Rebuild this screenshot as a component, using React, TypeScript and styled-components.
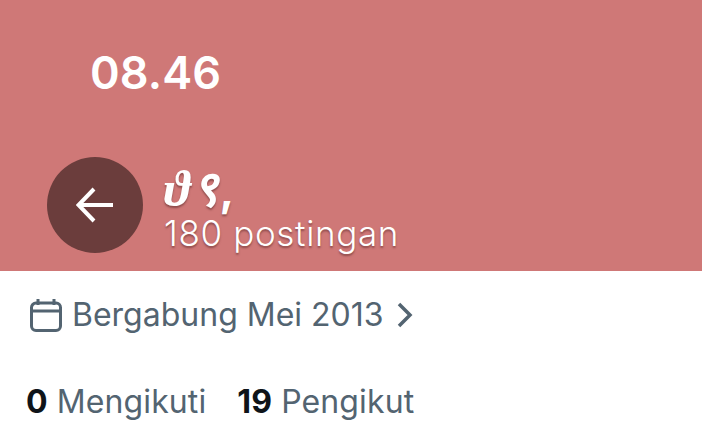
import styled, { createGlobalStyle } from 'styled-components';

const Global = createGlobalStyle`
  html, body { margin: 0; padding: 0; background: #fff; }
  body { font-family: Inter, "Noto Sans", sans-serif; }
`;

const Page = styled.div`
  width: 702px;
  height: 441px;
  overflow: hidden;
  display: flex;
  flex-direction: column;
`;

const Banner = styled.header`
  height: 271px;
  flex: none;
  box-sizing: border-box;
  background: #cf7877;
  color: #fff;
  display: flex;
  flex-direction: column;
  justify-content: space-between;
  padding: 46px 0 18px 47px;
`;

const Clock = styled.div`
  margin-left: 43px;
  font-size: 45px;
  line-height: 54px;
  font-weight: 600;
  letter-spacing: 0.1px;
`;

const Bar = styled.div`
  display: flex;
  align-items: center;
  gap: 21px;
`;

const BackButton = styled.div`
  width: 96px;
  height: 96px;
  border-radius: 50%;
  background: #6b3d3c;
  display: flex;
  align-items: center;
  justify-content: center;
`;

const Titles = styled.div`
  display: flex;
  flex-direction: column;
  margin-top: 10px;
  text-shadow: 0 2px 2px rgba(90, 40, 40, 0.55);
`;

const Name = styled.div`
  font-family: "Liberation Serif", "DejaVu Sans", serif;
  font-size: 50px;
  line-height: 40px;
  margin-bottom: 4px;
  font-style: italic;
  font-weight: 700;
  letter-spacing: 1.5px;
`;

const Comma = styled.span`
  font-family: Inter, sans-serif;
  font-size: 44px;
  font-style: normal;
`;

const Count = styled.div`
  font-size: 35px;
  line-height: 38px;
  font-weight: 300;
  letter-spacing: 0.65px;
`;

const Details = styled.section`
  display: flex;
  flex-direction: column;
  gap: 45px;
  padding: 23px 0 0 26px;
  color: #536471;
  font-size: 32px;
  line-height: 42px;
`;

const Joined = styled.div`
  display: flex;
  align-items: center;
  gap: 9px;
  margin-left: 3px;
`;

const Chevron = styled.svg`
  margin-left: 3px;
`;

const Stats = styled.div`
  display: flex;
  gap: 31px;
  letter-spacing: 0.12px;
`;

const Stat = styled.span`
  display: flex;
  gap: 9px;
`;

const Num = styled.b`
  color: #0f1419;
  font-weight: 700;
`;

export default function App() {
  return (
    <Page>
      <Global />
      <Banner>
        <Clock>08.46</Clock>
        <Bar>
          <BackButton>
            <svg width="38" height="36" viewBox="0 0 38 36" fill="none" stroke="#fff" strokeWidth="4">
              <path d="M37 18H3M18 2 2.500 18 18 34" />
            </svg>
          </BackButton>
          <Titles>
            <Name>ϑ९<Comma>,</Comma></Name>
            <Count>180 postingan</Count>
          </Titles>
        </Bar>
      </Banner>
      <Details>
        <Joined>
          <svg width="34" height="34" viewBox="0 0 34 34" fill="none" stroke="#536471" strokeWidth="3">
            <path d="M2.500 13H31.500M9 1V7M25 1V7M7 5H27A4.500 4.500 0 0 1 31.500 9.500V28A4.500 4.500 0 0 1 27 32.500H7A4.500 4.500 0 0 1 2.500 28V9.500A4.500 4.500 0 0 1 7 5Z" />
          </svg>
          <span>Bergabung Mei 2013</span>
          <Chevron width="18" height="26" viewBox="0 0 18 26" fill="none" stroke="#536471" strokeWidth="3.500">
            <path d="M3 2l11 11L3 24" />
          </Chevron>
        </Joined>
        <Stats>
          <Stat><Num>0</Num> Mengikuti</Stat>
          <Stat><Num>19</Num> Pengikut</Stat>
        </Stats>
      </Details>
    </Page>
  );
}
